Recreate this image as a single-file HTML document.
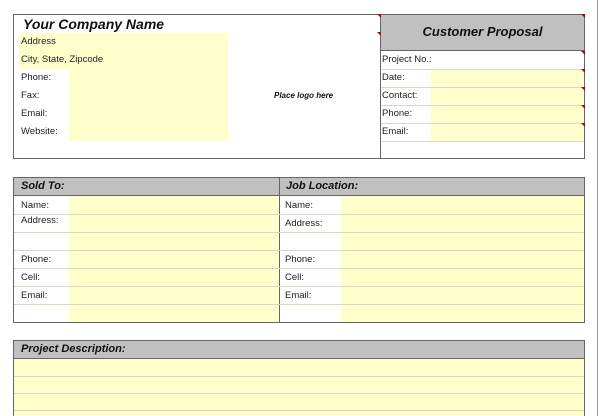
<!DOCTYPE html>
<html style="width:600px;height:416px;overflow:hidden"><head><style>
*{margin:0;padding:0;box-sizing:border-box}
body{width:600px;height:416px;background:#fff;position:relative;overflow:hidden;font-family:"Liberation Sans",Arial,sans-serif;color:#111}
.a{position:absolute}
.t{position:absolute;font-size:9.5px;line-height:18px;color:#222}
.y{position:absolute;background:#ffffcc}
.hl{position:absolute;height:1px;background:#d8d8c8}
.g{position:absolute;background:#c0c0c0}
.h{position:absolute;font-weight:bold;font-style:italic}
.red{position:absolute;width:0;height:0;border-top:4px solid #b00;border-left:4px solid transparent}
</style></head><body>
<div class="a" style="left:597px;top:0;width:1px;height:416px;background:#999"></div>

<div class="a" style="left:13px;top:14px;width:572px;height:145px;border:1px solid #666"></div>
<div class="y" style="left:19px;top:33px;width:209px;height:36px"></div>
<div class="y" style="left:69px;top:69px;width:159px;height:72px"></div>
<div class="h" style="left:23px;top:15px;font-size:14px;line-height:18px">Your Company Name</div>
<div class="t" style="left:21px;top:33px">Address</div>
<div class="t" style="left:21px;top:51px">City, State, Zipcode</div>
<div class="t" style="left:21px;top:69px">Phone:</div>
<div class="t" style="left:21px;top:87px">Fax:</div>
<div class="t" style="left:21px;top:105px">Email:</div>
<div class="t" style="left:21px;top:123px">Website:</div>
<div class="h" style="left:274px;top:91px;font-size:8px">Place logo here</div>
<div class="a" style="left:380px;top:14px;width:1px;height:145px;background:#666"></div>
<div class="g" style="left:381px;top:15px;width:203px;height:36px;border-bottom:1px solid #666"></div>
<div class="h" style="left:381px;top:24px;width:203px;text-align:center;font-size:13px">Customer Proposal</div>
<div class="y" style="left:431px;top:69px;width:153px;height:72px"></div>
<div class="hl" style="left:381px;top:69px;width:203px"></div>
<div class="hl" style="left:381px;top:87px;width:203px"></div>
<div class="hl" style="left:381px;top:105px;width:203px"></div>
<div class="hl" style="left:381px;top:123px;width:203px"></div>
<div class="hl" style="left:381px;top:141px;width:203px"></div>
<div class="t" style="left:382px;top:51px">Project No.:</div>
<div class="t" style="left:382px;top:69px">Date:</div>
<div class="t" style="left:382px;top:87px">Contact:</div>
<div class="t" style="left:382px;top:105px">Phone:</div>
<div class="t" style="left:382px;top:123px">Email:</div>
<div class="red" style="left:377px;top:14px"></div>
<div class="red" style="left:377px;top:32px"></div>
<div class="red" style="left:581px;top:14px"></div>
<div class="red" style="left:581px;top:51px"></div>
<div class="red" style="left:581px;top:69px"></div>
<div class="red" style="left:581px;top:87px"></div>
<div class="red" style="left:581px;top:105px"></div>
<div class="red" style="left:581px;top:123px"></div>

<div class="a" style="left:13px;top:177px;width:572px;height:146px;border:1px solid #666"></div>
<div class="g" style="left:14px;top:178px;width:570px;height:18px;border-bottom:1px solid #666"></div>
<div class="y" style="left:69px;top:196px;width:210px;height:126px"></div>
<div class="y" style="left:341px;top:196px;width:243px;height:126px"></div>
<div class="a" style="left:279px;top:177px;width:1px;height:146px;background:#666"></div>
<div class="hl" style="left:14px;top:214px;width:570px"></div>
<div class="hl" style="left:14px;top:232px;width:570px"></div>
<div class="hl" style="left:14px;top:250px;width:570px"></div>
<div class="hl" style="left:14px;top:268px;width:570px"></div>
<div class="hl" style="left:14px;top:286px;width:570px"></div>
<div class="hl" style="left:14px;top:304px;width:570px"></div>
<div class="h" style="left:21px;top:180px;font-size:11px">Sold To:</div>
<div class="h" style="left:286px;top:180px;font-size:11px">Job Location:</div>
<div class="t" style="left:21px;top:197px">Name:</div>
<div class="t" style="left:21px;top:212px">Address:</div>
<div class="t" style="left:21px;top:251px">Phone:</div>
<div class="t" style="left:21px;top:269px">Cell:</div>
<div class="t" style="left:21px;top:287px">Email:</div>
<div class="t" style="left:285px;top:197px">Name:</div>
<div class="t" style="left:285px;top:215px">Address:</div>
<div class="t" style="left:285px;top:251px">Phone:</div>
<div class="t" style="left:285px;top:269px">Cell:</div>
<div class="t" style="left:285px;top:287px">Email:</div>

<div class="a" style="left:13px;top:340px;width:572px;height:90px;border:1px solid #666"></div>
<div class="g" style="left:14px;top:341px;width:570px;height:18px;border-bottom:1px solid #666"></div>
<div class="y" style="left:14px;top:359px;width:570px;height:70px"></div>
<div class="hl" style="left:14px;top:376px;width:570px"></div>
<div class="hl" style="left:14px;top:393px;width:570px"></div>
<div class="hl" style="left:14px;top:410px;width:570px"></div>
<div class="h" style="left:21px;top:343px;font-size:11px">Project Description:</div>
</body></html>
